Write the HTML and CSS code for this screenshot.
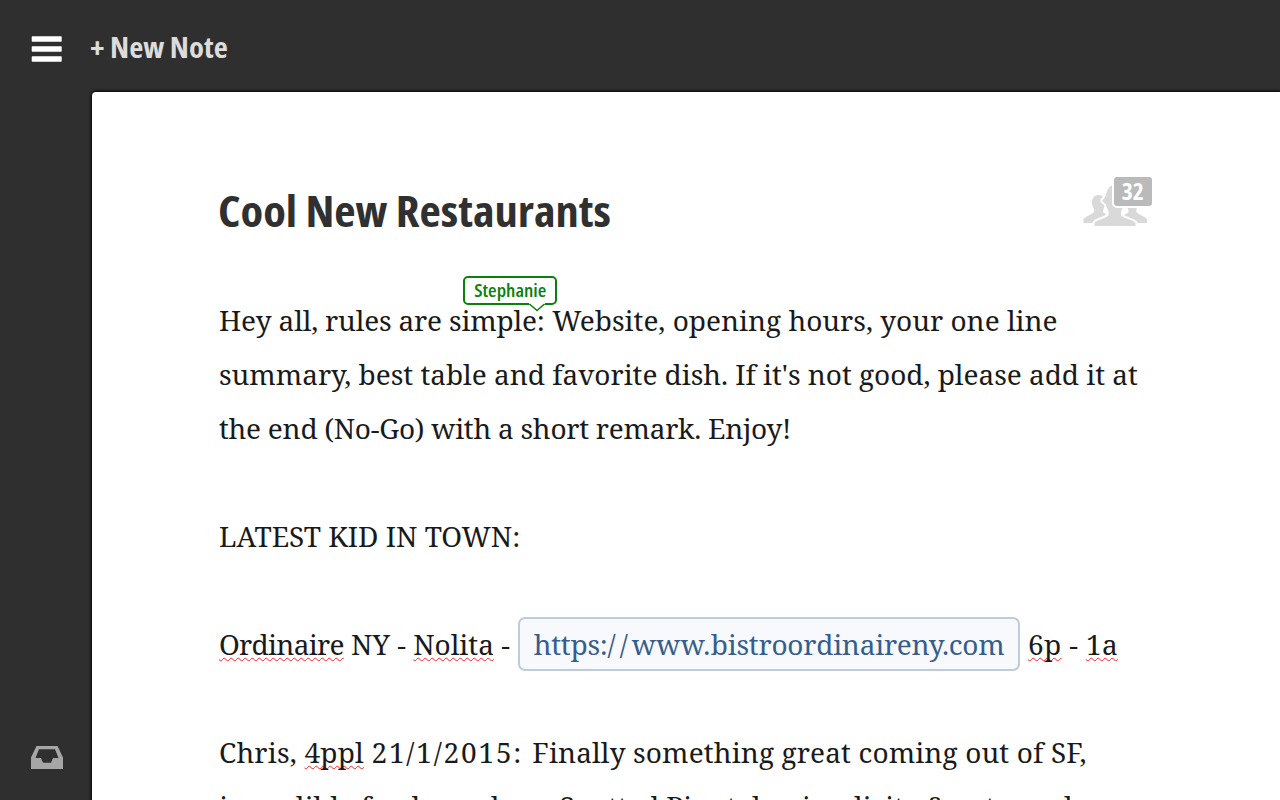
FILE: index.html
```html
<!DOCTYPE html>
<html lang="en">
<head>
<meta charset="utf-8">
<title>Cool New Restaurants</title>
<link rel="stylesheet" href="styles.css">
</head>
<body>
<header class="topbar">
  <svg class="menu" width="32" height="28" viewBox="0 0 32 28"><g fill="#fff"><rect x="0.700" y="1.300" width="30" height="5.400" rx="0.6"/><rect x="0.700" y="11.300" width="30" height="5.400" rx="0.6"/><rect x="0.700" y="21.300" width="30" height="5.400" rx="0.6"/></g></svg>
  <span class="new-note">+ New Note</span>
</header>
<div class="workspace">
  <aside class="rail">
    <svg class="inbox" width="34" height="26" viewBox="0 0 34 26"><path fill="#a6a6a6" fill-rule="evenodd" d="M6.500 1h21L33 12.500V24H1V12.500zM9 4.300 5.500 13H11l2 4.800h8l2-4.800h5.500L25 4.300z"/></svg>
  </aside>
  <main class="paper">
    <div class="heading">
      <h1 class="title">Cool New Restaurants</h1>
      <div class="people">
        <svg width="70" height="50" viewBox="0 0 70 50"><g fill="#d9d9d9"><path d="M.5 45v-4c3-3 9-5 10.500-7 1-3-2-5-2-9 0-5 2-8 6.500-8s6.500 3 6.500 8c0 4-2 6-2 9 1 2 8 4 9 7v4z"/><path d="M64 45v-4c-3-3-9-5-10.500-7-1-3 2-5 2-9 0-5-2-8-6-8s-6 3-6 8c0 4 2 6 2 9-1 2-8 4-9 7v4z"/><path stroke="#fff" stroke-width="2" d="M10.500 49v-4.500c3-4 11-4.500 14-7.500 1.500-3-1.500-6-2.500-10-1-2-4.500-2.500-3.500-5.500 6-3 2-15.500 13.500-15.500s12 7 12 14c0 5-2 6-3 9-1 4-3 5-2 8 3 3 11 3.500 14.500 7.500V49z"/></g></svg>
        <span class="count"><span class="count-num">32</span></span>
      </div>
    </div>
    <div class="note">
      <div class="line"><span class="l1">Hey all, rules are simple</span><span class="cursor">:<span class="user"><span class="user-name">Stephanie</span><svg class="tip" width="16" height="9" viewBox="0 0 16 9"><path d="M0 0h16v1L8 7.500 0 1z" fill="#fff"/><path d="M.5 1 8 7.500 15.500 1" fill="none" stroke="#0c800c" stroke-width="1.500"/></svg></span></span><span class="l1b"> Website, opening hours, your one line</span></div>
      <div class="line l2">summary, best table and favorite dish. If it's not good, please add it at</div>
      <div class="line l3">the end (No-Go) with a short remark. Enjoy!</div>
      <div class="line"></div>
      <div class="line l4">LATEST KID IN TOWN:</div>
      <div class="line"></div>
      <div class="line row"><span class="l5"><span class="typo tight">Ordinaire</span> NY - <span class="typo">Nolita</span> -</span><a class="link">https:<span class="slashes">//</span><span class="www">www.</span>bistroordinaireny.com</a><span class="l6"><span class="typo">6p</span> - <span class="typo">1a</span></span></div>
      <div class="line"></div>
      <div class="line"><span class="l7">Chris, <span class="typo">4ppl</span> </span><span class="date">21/1/2015: </span><span class="l8">Finally something great coming out of SF,</span></div>
      <div class="line l9">incredible fresh produce, Spotted Pig style, simplicity &amp; extremely</div>
    </div>
  </main>
</div>
</body>
</html>
```
FILE: styles.css
```css
* { box-sizing: border-box; }
body { margin: 0; height: 800px; overflow: hidden; background: #2f2f2f; display: flex; flex-direction: column; font-family: "Open Sans", "Liberation Sans", sans-serif; }
.topbar { height: 92px; flex: none; display: flex; align-items: flex-start; padding: 27px 0 0 31px; }
.menu { margin: 8px 27px 0 0; flex: none; }
.new-note { font-size: 29px; line-height: 40px; font-weight: 700; font-stretch: 75%; color: #dcdcdc; white-space: nowrap; transform: scaleX(1.06); transform-origin: left; }
.workspace { flex: 1; min-height: 0; display: flex; }
.rail { width: 92px; flex: none; display: flex; align-items: flex-end; padding: 0 0 29px 30px; }
.paper { flex: 1; min-width: 0; background: #fff; border-radius: 4px 0 0 0; box-shadow: 0 0 3px 1px #000; padding: 83px 127px 0 126px; overflow: hidden; }
.heading { display: flex; justify-content: space-between; height: 118px; }
.title { margin: 6px 0 0; font-size: 42px; line-height: 60px; font-weight: 700; font-stretch: 75%; color: #303030; white-space: nowrap; transform: scaleX(1.107); transform-origin: left; }
.people { position: relative; width: 70px; height: 52px; padding-top: 3px; }
.count { position: absolute; left: 31px; top: 2px; width: 38px; height: 29px; border-radius: 3px; background: #bababa; box-shadow: 0 0 0 2px #fff; color: #fff; text-align: center; font-size: 23px; line-height: 28px; font-weight: 700; font-stretch: 75%; }
.count-num { display: inline-block; transform: scaleX(1.03); }
.note { padding-left: 1px; font-family: "Noto Serif", "DejaVu Serif Condensed", serif; font-size: 28px; color: #1a1a1a; }
.line { height: 54px; line-height: 54px; white-space: pre; position: relative; top: -0.5px; }
.row { display: flex; align-items: center; width: 899px; top: 0; line-height: 53px; }
.l1 { letter-spacing: -0.18px; }
.l1b { letter-spacing: 0; }
.l2 { letter-spacing: -0.03px; }
.l3 { letter-spacing: -0.26px; }
.l5 { letter-spacing: 0; }
.tight { letter-spacing: -0.7px; }
.l6 { letter-spacing: 0.35px; }
.link { height: 54px; line-height: 50px; width: 502px; margin: 0 8px 0 auto; text-align: center; border: 2px solid #bccbdd; border-radius: 7px; background: #f8f9fc; color: #355e8d; letter-spacing: -0.24px; flex: none; }
.slashes { letter-spacing: 4px; }
.www { letter-spacing: 0.4px; }
.l7 { letter-spacing: 0.2px; }
.date { letter-spacing: 1.8px; }
.l8 { letter-spacing: 0.13px; }
.l9 { letter-spacing: -0.13px; }
.typo { text-decoration: underline wavy #ff2020 1px; text-underline-offset: 2px; text-decoration-skip-ink: none; }
.cursor { position: relative; }
.user { position: absolute; right: -12px; bottom: 34px; width: 94px; height: 29px; border: 2px solid #0c800c; border-radius: 5px; background: #fff; color: #0c800c; text-align: center; font: 600 17px/25px "Open Sans", sans-serif; font-stretch: 75%; letter-spacing: 0; }
.user-name { display: inline-block; transform: scaleX(1.155); }
.tip { position: absolute; left: 64px; top: 25px; }
```
